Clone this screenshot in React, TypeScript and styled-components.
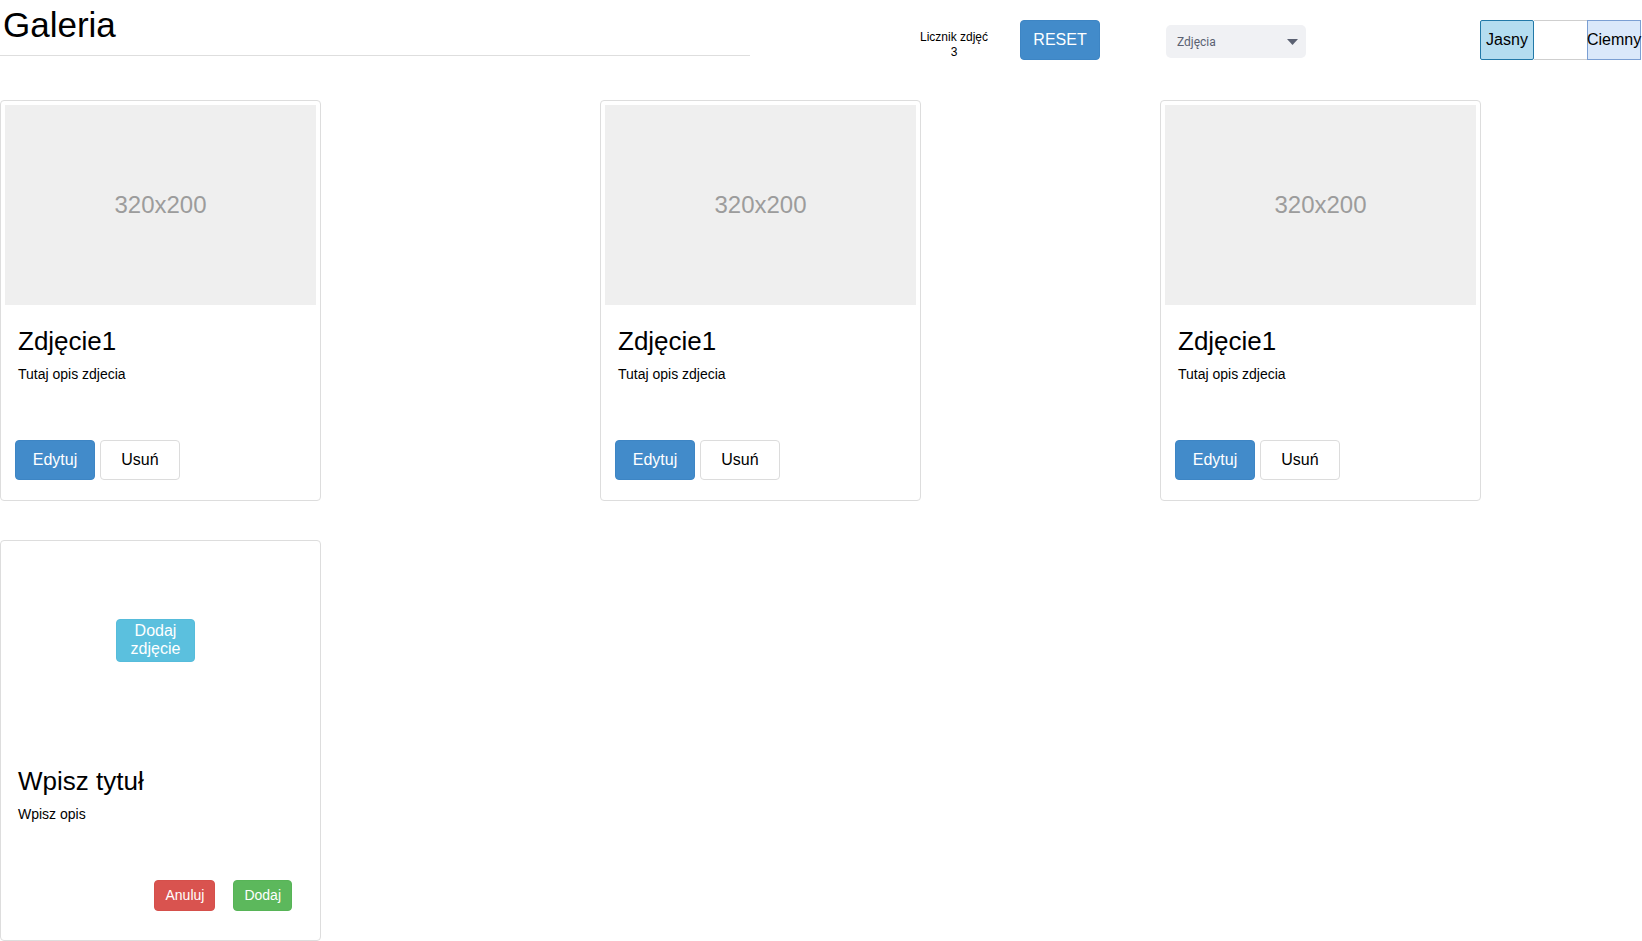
import React from "react";
import styled, { createGlobalStyle, css } from "styled-components";

const GlobalStyle = createGlobalStyle`
  html, body {
    margin: 0;
    padding: 0;
    background: #ffffff;
  }
  body {
    font-family: "Liberation Sans", Arial, sans-serif;
    color: #000;
  }
  * { box-sizing: border-box; }
`;

const Page = styled.div`
  width: 1642px;
`;

const Header = styled.header`
  display: flex;
  align-items: flex-start;
  height: 60px;
`;

const TitleBlock = styled.div`
  width: 750px;
  flex: none;
`;

const Title = styled.h1`
  margin: 5px 0 0 3px;
  font-size: 35px;
  line-height: 39px;
  font-weight: 400;
`;

const Rule = styled.div`
  margin-top: 11px;
  border-top: 1px solid #dedede;
`;

const Counter = styled.div`
  width: 80px;
  margin: 30px 0 0 164px;
  text-align: center;
  font-size: 12px;
  line-height: 15px;
`;

const BaseButton = styled.button`
  font-family: "Liberation Sans", Arial, sans-serif;
  border: 1px solid transparent;
  border-radius: 4px;
  cursor: pointer;
  padding: 0;
  text-align: center;
`;

const ResetButton = styled(BaseButton)`
  width: 80px;
  height: 40px;
  margin: 20px 0 0 26px;
  background: #428bca;
  border-color: #3d85c4;
  color: #fff;
  font-size: 16px;
`;

const Select = styled.div`
  width: 140px;
  height: 33px;
  margin: 25px 0 0 66px;
  padding: 0 8px 0 11px;
  border-radius: 5px;
  background: #f0f1f4;
  display: flex;
  align-items: center;
  justify-content: space-between;
  font-family: Roboto, "Liberation Sans", Arial, sans-serif;
  font-size: 12px;
  color: #5b6172;
`;

const ThemeToggle = styled.div`
  display: flex;
  margin: 20px 0 0 174px;
  height: 40px;
`;

type SegKind = "light" | "gap" | "dark";

const Segment = styled.div<{ $kind: SegKind }>`
  height: 40px;
  display: flex;
  align-items: center;
  justify-content: center;
  font-size: 16px;
  white-space: nowrap;
  ${({ $kind }) =>
    $kind === "light"
      ? css`
          width: 54px;
          background: #b4ddf0;
          border: 1px solid #2279a8;
          border-radius: 2px;
        `
      : $kind === "gap"
      ? css`
          width: 53px;
          background: #fff;
          border-top: 1px solid #cfcfcf;
          border-bottom: 1px solid #cfcfcf;
        `
      : css`
          width: 54px;
          background: #dae8fa;
          border: 1px solid #7b9fd3;
        `}
`;

const Grid = styled.main`
  margin-top: 40px;
  display: grid;
  grid-template-columns: 600px 560px 321px;
  row-gap: 39px;
  align-items: start;
`;

const Card = styled.article`
  width: 321px;
  border: 1px solid #dddddd;
  border-radius: 4px;
  padding: 4px;
  background: #fff;
`;

const Thumb = styled.div`
  height: 200px;
  background: #efefef;
  display: flex;
  align-items: center;
  justify-content: center;
  color: #9c9c9c;
  font-size: 24px;
`;

const AddArea = styled.div`
  height: 200px;
  display: flex;
  align-items: center;
  justify-content: center;
  padding: 0 10px 9px 0;
`;

const Caption = styled.div`
  padding: 22px 0 16px;
`;

const CardTitle = styled.h3`
  margin: 0 0 0 13px;
  font-size: 26px;
  line-height: 29px;
  font-weight: 400;
`;

const CardText = styled.p`
  margin: 8px 0 0 13px;
  font-size: 14px;
  line-height: 20px;
`;

const Actions = styled.div<{ $end?: boolean }>`
  margin-top: 56px;
  height: 40px;
  display: flex;
  align-items: flex-start;
  ${({ $end }) =>
    $end
      ? css`
          justify-content: flex-end;
          gap: 18px;
          padding-right: 24px;
        `
      : css`
          gap: 5px;
          padding-left: 10px;
        `}
`;

type Variant = "primary" | "default" | "info" | "danger" | "success";

const palette: Record<Variant, { bg: string; border: string; color: string }> = {
  primary: { bg: "#428bca", border: "#3d85c4", color: "#fff" },
  default: { bg: "#fff", border: "#dcdcdc", color: "#000" },
  info: { bg: "#5bc0de", border: "#56bcdb", color: "#fff" },
  danger: { bg: "#d9534f", border: "#d5504b", color: "#fff" },
  success: { bg: "#5cb85c", border: "#57b457", color: "#fff" },
};

const ActionButton = styled(BaseButton)<{ $variant: Variant }>`
  width: 80px;
  height: 40px;
  font-size: 16px;
  background: ${({ $variant }) => palette[$variant].bg};
  border-color: ${({ $variant }) => palette[$variant].border};
  color: ${({ $variant }) => palette[$variant].color};
`;

const SmallButton = styled(BaseButton)<{ $variant: Variant }>`
  padding: 5px 10px;
  font-size: 14px;
  line-height: 19px;
  background: ${({ $variant }) => palette[$variant].bg};
  border-color: ${({ $variant }) => palette[$variant].border};
  color: ${({ $variant }) => palette[$variant].color};
`;

const UploadButton = styled(BaseButton)`
  width: 79px;
  padding: 2px 0 3px;
  font-size: 16px;
  line-height: 18px;
  background: #5bc0de;
  border-color: #56bcdb;
  color: #fff;
`;

const photos = [
  { id: 1, title: "Zdjęcie1", text: "Tutaj opis zdjecia" },
  { id: 2, title: "Zdjęcie1", text: "Tutaj opis zdjecia" },
  { id: 3, title: "Zdjęcie1", text: "Tutaj opis zdjecia" },
];

export default function App() {
  return (
    <Page>
      <GlobalStyle />
      <Header>
        <TitleBlock>
          <Title>Galeria</Title>
          <Rule />
        </TitleBlock>
        <Counter>
          Licznik zdjęć
          <br />3
        </Counter>
        <ResetButton>RESET</ResetButton>
        <Select>
          <span>Zdjęcia</span>
          <svg width="11" height="6" viewBox="0 0 11 6">
            <polygon points="0,0 11,0 5.5,6" fill="#5b6172" />
          </svg>
        </Select>
        <ThemeToggle>
          <Segment $kind="light">Jasny</Segment>
          <Segment $kind="gap" />
          <Segment $kind="dark">Ciemny</Segment>
        </ThemeToggle>
      </Header>
      <Grid>
        {photos.map((p) => (
          <Card key={p.id}>
            <Thumb>320x200</Thumb>
            <Caption>
              <CardTitle>{p.title}</CardTitle>
              <CardText>{p.text}</CardText>
              <Actions>
                <ActionButton $variant="primary">Edytuj</ActionButton>
                <ActionButton $variant="default">Usuń</ActionButton>
              </Actions>
            </Caption>
          </Card>
        ))}
        <Card>
          <AddArea>
            <UploadButton>Dodaj zdjęcie</UploadButton>
          </AddArea>
          <Caption>
            <CardTitle>Wpisz tytuł</CardTitle>
            <CardText>Wpisz opis</CardText>
            <Actions $end>
              <SmallButton $variant="danger">Anuluj</SmallButton>
              <SmallButton $variant="success">Dodaj</SmallButton>
            </Actions>
          </Caption>
        </Card>
      </Grid>
    </Page>
  );
}
